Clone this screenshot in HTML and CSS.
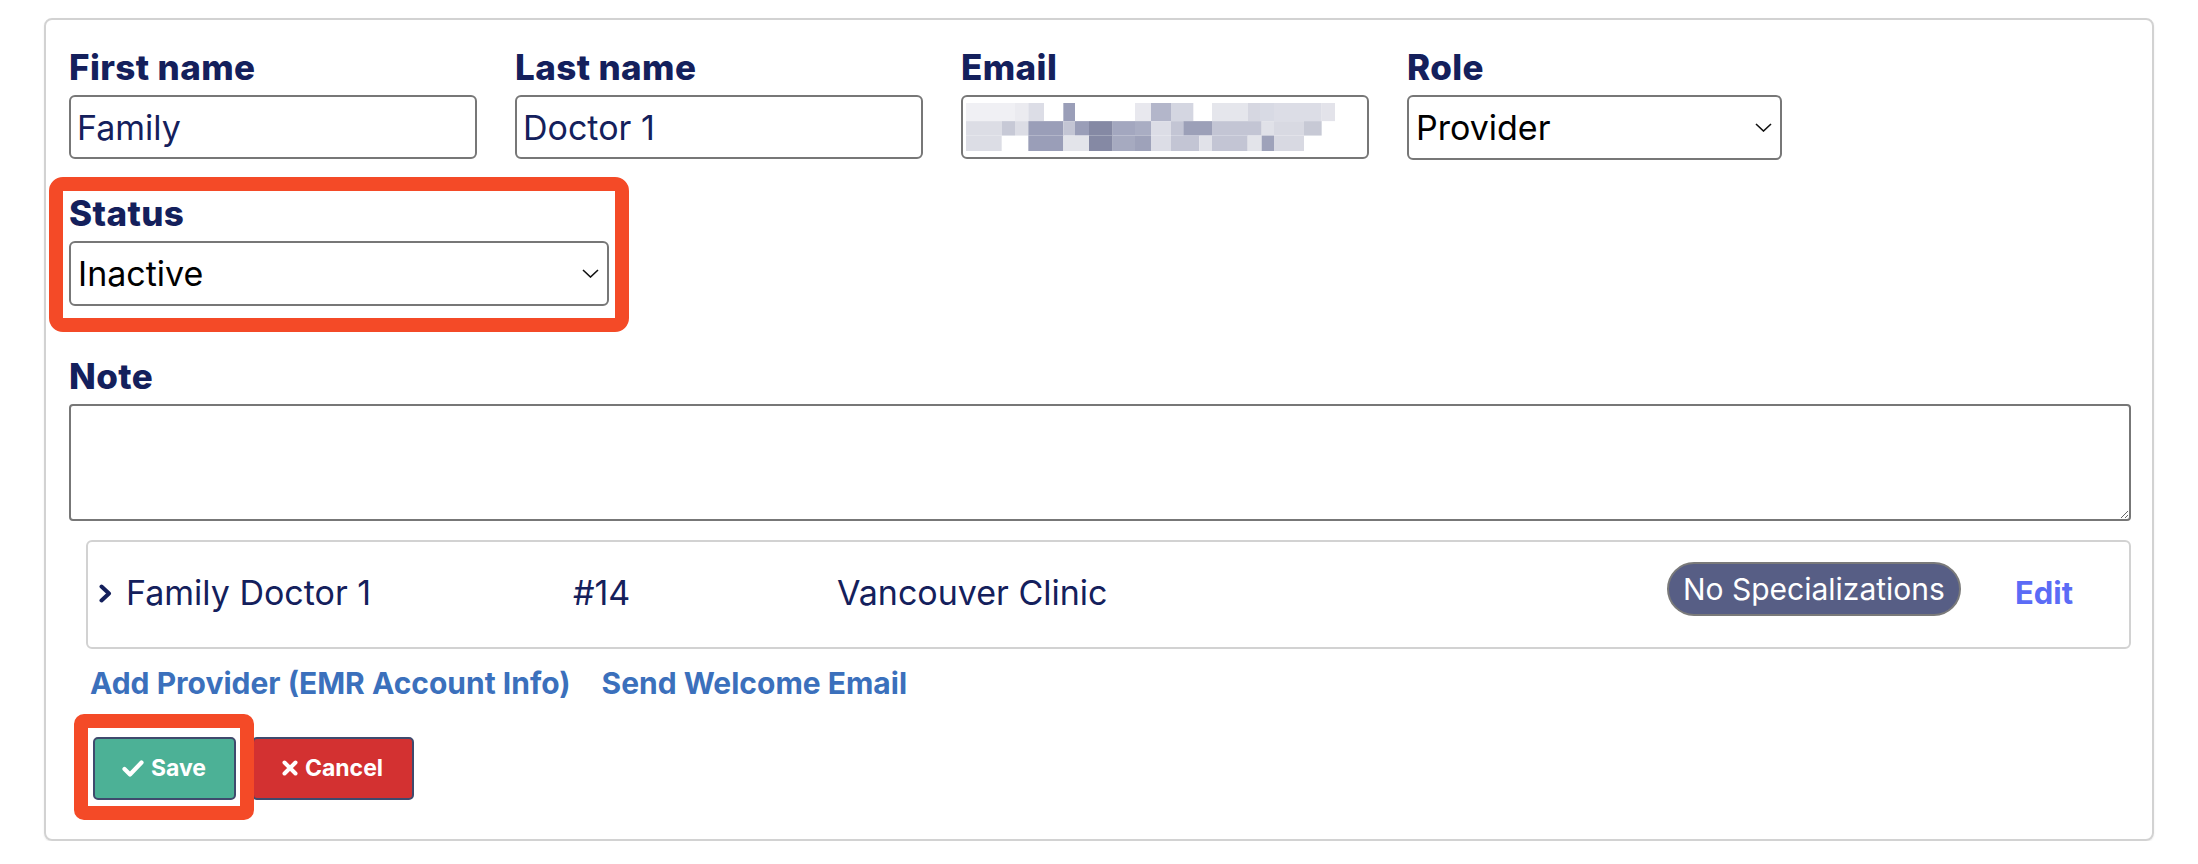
FILE: index.html
```html
<!DOCTYPE html>
<html lang="en">
<head>
<meta charset="utf-8">
<title>Edit Provider</title>
<link rel="stylesheet" href="styles.css">
</head>
<body>
<div class="card">
  <div class="row1">
    <div class="field">
      <label class="field-label">First name</label>
      <input class="text-input" type="text" value="Family">
    </div>
    <div class="field">
      <label class="field-label">Last name</label>
      <input class="text-input" type="text" value="Doctor 1">
    </div>
    <div class="field">
      <label class="field-label">Email</label>
      <div class="text-input email-box">
        <svg class="blur" width="369" height="48" viewBox="78 168 1107 143" preserveAspectRatio="none">
          <g>
            <rect x="78" y="168" width="147" height="54" fill="#f0f0f4"/>
            <rect x="225" y="168" width="40" height="54" fill="#ebebf0"/>
            <rect x="265" y="168" width="47" height="54" fill="#dcdde6"/>
            <rect x="370" y="168" width="35" height="54" fill="#9a9eb8"/>
            <rect x="585" y="168" width="48" height="54" fill="#e8e8ee"/>
            <rect x="633" y="168" width="60" height="54" fill="#b3b6ca"/>
            <rect x="693" y="168" width="67" height="54" fill="#d4d6e1"/>
            <rect x="816" y="168" width="107" height="54" fill="#e5e6ec"/>
            <rect x="923" y="168" width="37" height="54" fill="#d6d7e1"/>
            <rect x="960" y="168" width="42" height="54" fill="#d8dae4"/>
            <rect x="1002" y="168" width="143" height="54" fill="#dcdde6"/>
            <rect x="1145" y="168" width="40" height="54" fill="#e3e3ea"/>

            <rect x="78" y="222" width="107" height="43" fill="#dcdde5"/>
            <rect x="185" y="222" width="40" height="43" fill="#c7c9d6"/>
            <rect x="225" y="222" width="40" height="43" fill="#dcdde5"/>
            <rect x="265" y="222" width="105" height="43" fill="#9a9eb8"/>
            <rect x="370" y="222" width="35" height="43" fill="#c3c5d4"/>
            <rect x="405" y="222" width="42" height="43" fill="#9a9eb8"/>
            <rect x="447" y="222" width="71" height="43" fill="#8589a4"/>
            <rect x="518" y="222" width="67" height="43" fill="#a3a7bf"/>
            <rect x="585" y="222" width="48" height="43" fill="#a9adc3"/>
            <rect x="633" y="222" width="60" height="43" fill="#dcdde6"/>
            <rect x="693" y="222" width="37" height="43" fill="#c3c5d4"/>
            <rect x="730" y="222" width="86" height="43" fill="#9ca0b8"/>
            <rect x="816" y="222" width="149" height="43" fill="#c3c5d4"/>
            <rect x="965" y="222" width="37" height="43" fill="#e0e1e8"/>
            <rect x="1002" y="222" width="90" height="43" fill="#d8d9e2"/>
            <rect x="1092" y="222" width="53" height="43" fill="#c7c9d5"/>

            <rect x="78" y="265" width="107" height="46" fill="#dcdde5"/>
            <rect x="265" y="265" width="105" height="46" fill="#9a9eb8"/>
            <rect x="370" y="265" width="77" height="46" fill="#e3e4ea"/>
            <rect x="447" y="265" width="71" height="46" fill="#8589a4"/>
            <rect x="518" y="265" width="67" height="46" fill="#a6aac0"/>
            <rect x="585" y="265" width="48" height="46" fill="#9ea2ba"/>
            <rect x="633" y="265" width="60" height="46" fill="#dcdde6"/>
            <rect x="693" y="265" width="85" height="46" fill="#c3c5d4"/>
            <rect x="778" y="265" width="38" height="46" fill="#e1e2e9"/>
            <rect x="816" y="265" width="107" height="46" fill="#c3c5d4"/>
            <rect x="923" y="265" width="42" height="46" fill="#e3e4ea"/>
            <rect x="965" y="265" width="37" height="46" fill="#9ea2ba"/>
            <rect x="1002" y="265" width="90" height="46" fill="#d8d9e2"/>
          </g>
        </svg>
      </div>
    </div>
    <div class="field">
      <label class="field-label">Role</label>
      <div class="select-wrap">
        <select class="select role-select">
          <option>Provider</option>
        </select>
        <svg class="select-chevron" width="17" height="9" viewBox="0 0 17 9"><polyline points="1,1 8.5,8 16,1" fill="none" stroke="#111" stroke-width="1.6"/></svg>
      </div>
    </div>
  </div>

  <div class="status">
    <label class="field-label">Status</label>
    <div class="select-wrap">
      <select class="select status-select">
        <option>Inactive</option>
      </select>
      <svg class="select-chevron" width="17" height="9" viewBox="0 0 17 9"><polyline points="1,1 8.5,8 16,1" fill="none" stroke="#111" stroke-width="1.6"/></svg>
    </div>
  </div>

  <div class="note">
    <label class="field-label">Note</label>
    <textarea class="note-area"></textarea>
  </div>

  <div class="provider-row">
    <div class="col-name">
      <svg class="row-chevron" width="13" height="19" viewBox="0 0 13 19"><polyline points="2.5,2.5 10,9.5 2.5,16.5" fill="none" stroke="#14205c" stroke-width="4" stroke-linejoin="round" stroke-linecap="round"/></svg>
      <span>Family Doctor 1</span>
    </div>
    <div class="col-num">#14</div>
    <div class="col-clinic">Vancouver Clinic</div>
    <span class="badge">No Specializations</span>
    <a class="edit-link">Edit</a>
  </div>

  <div class="links">
    <a class="link">Add Provider (EMR Account Info)</a>
    <a class="link">Send Welcome Email</a>
  </div>

  <div class="actions">
    <button class="btn save">
      <svg width="22" height="17" viewBox="0 0 22 17"><polyline points="2.5,9 8,14.5 19.5,2.5" fill="none" stroke="#fff" stroke-width="4.2" stroke-linecap="round" stroke-linejoin="round"/></svg>
      <span>Save</span>
    </button>
    <button class="btn cancel">
      <svg width="16" height="16" viewBox="0 0 16 16"><path d="M2.5 2.5 L13.5 13.5 M13.5 2.5 L2.5 13.5" fill="none" stroke="#fff" stroke-width="4" stroke-linecap="round"/></svg>
      <span>Cancel</span>
    </button>
  </div>
</div>
</body>
</html>
```

FILE: styles.css
```css
html, body {
  margin: 0;
  padding: 0;
  background: #ffffff;
  font-family: Inter, "Noto Sans", sans-serif;
}

.card {
  box-sizing: border-box;
  width: 2110px;
  margin: 18px 0 0 44px;
  border: 2px solid #d2d2d2;
  border-radius: 8px;
  padding: 27px 21px 39px 23px;
  box-shadow: 0 1px 2px rgba(0, 0, 0, 0.08);
}

.field-label {
  display: block;
  font-size: 35px;
  line-height: 40px;
  font-weight: 800;
  letter-spacing: 0.4px;
  color: #14205c;
  margin-bottom: 8px;
}

.row1 {
  display: grid;
  grid-template-columns: 408px 408px 408px 375px;
  column-gap: 38px;
}

.text-input {
  display: block;
  box-sizing: border-box;
  width: 100%;
  height: 64px;
  margin: 0;
  border: 2px solid #777777;
  border-radius: 6px;
  padding: 0 6px;
  font-family: Inter, "Noto Sans", sans-serif;
  font-size: 34px;
  font-weight: 400;
  color: #14205c;
  background: #ffffff;
  outline: none;
}

.email-box {
  display: flex;
  align-items: center;
  padding: 0 0 0 3px;
}

.blur {
  display: block;
}

.select-wrap {
  position: relative;
}

.select {
  display: block;
  appearance: none;
  -webkit-appearance: none;
  box-sizing: border-box;
  width: 100%;
  height: 65px;
  margin: 0;
  border: 2px solid #777777;
  border-radius: 6px;
  padding: 0 40px 0 7px;
  background: #ffffff;
  font-family: Inter, "Noto Sans", sans-serif;
  font-size: 34px;
  color: #000000;
  outline: none;
}

.select-chevron {
  position: absolute;
  right: 10px;
  top: 28px;
}

.status {
  position: relative;
  width: 540px;
  margin-top: 33px;
}

.status::after {
  content: "";
  position: absolute;
  left: -20px;
  right: -20px;
  top: -16.5px;
  bottom: -25.5px;
  border: 14px solid #f44a27;
  border-radius: 14px;
  pointer-events: none;
}

.note {
  margin-top: 50px;
}

.note-area {
  display: block;
  box-sizing: border-box;
  width: 100%;
  height: 117px;
  margin: 0;
  border: 2px solid #777777;
  border-radius: 4px;
  font-family: Inter, sans-serif;
  font-size: 30px;
  outline: none;
}

.provider-row {
  box-sizing: border-box;
  width: 2045px;
  height: 109px;
  margin: 19px 0 0 17px;
  border: 2px solid #d2d2d2;
  border-radius: 6px;
  padding: 0 56px 5px 11px;
  display: flex;
  align-items: center;
  font-size: 34px;
  color: #14205c;
}

.col-name {
  width: 474px;
  display: flex;
  align-items: center;
  gap: 14px;
}

.row-chevron {
  display: block;
  margin-top: 2px;
}

.col-num {
  width: 264px;
}

.col-clinic {
  flex: 1;
}

.badge {
  box-sizing: border-box;
  height: 54px;
  display: flex;
  align-items: center;
  padding: 0 14px;
  margin-bottom: 7px;
  background: #575e85;
  border: 2px solid #7a7a7a;
  border-radius: 27px;
  color: #ffffff;
  font-size: 30px;
  font-weight: 400;
}

.edit-link {
  margin-left: 54px;
  font-size: 31px;
  font-weight: 700;
  color: #5b6cf6;
}

.links {
  margin-top: 17px;
  padding-left: 21px;
  display: flex;
  gap: 31px;
  font-size: 30px;
  line-height: 34px;
  font-weight: 700;
}

.link {
  color: #3b70bc;
}

.actions {
  margin-top: 36.5px;
  padding-left: 23.5px;
  display: flex;
  gap: 16px;
}

.btn {
  box-sizing: border-box;
  height: 63.5px;
  border: 2px solid #3f4a6d;
  border-radius: 5px;
  color: #ffffff;
  font-family: Inter, "Noto Sans", sans-serif;
  font-size: 23px;
  font-weight: 700;
  display: flex;
  align-items: center;
  justify-content: center;
  gap: 7px;
  padding: 0;
}

.btn svg {
  display: block;
}

.save {
  position: relative;
  width: 143px;
  background: #4cb196;
}

.save::after {
  content: "";
  position: absolute;
  left: -20.5px;
  right: -20.5px;
  top: -24.5px;
  bottom: -21.5px;
  border: 14px solid #f44a27;
  border-radius: 10px;
  pointer-events: none;
}

.cancel {
  width: 162px;
  background: #d33131;
}
```
